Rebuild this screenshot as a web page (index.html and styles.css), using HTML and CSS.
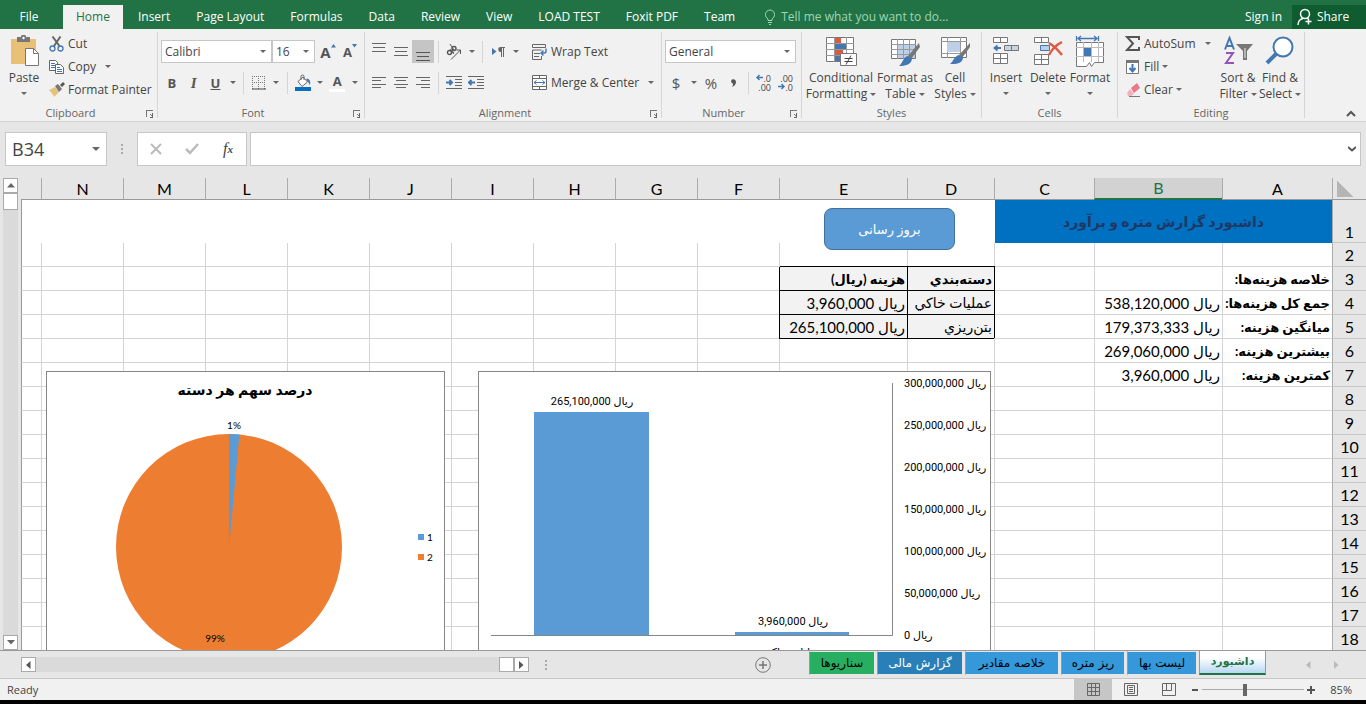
FILE: index.html
```html
<!DOCTYPE html>
<html lang="en">
<head>
  <meta charset="UTF-8" />
  <meta name="viewport" content="width=device-width, initial-scale=1.0"/>
  <title>داشبورد گزارش متره و برآورد</title>
  <link rel="stylesheet" href="styles.css">
</head>
<body>
  <!-- Tabs -->
  <header class="tabs">
    <button class="tab file">File</button>
    <button class="tab active">Home</button>
    <button class="tab">Insert</button>
    <button class="tab">Page Layout</button>
    <button class="tab">Formulas</button>
    <button class="tab">Data</button>
    <button class="tab">Review</button>
    <button class="tab">View</button>
    <button class="tab">LOAD TEST</button>
    <button class="tab">Foxit PDF</button>
    <button class="tab">Team</button>
    <button class="tell-me">
      <svg width="12" height="16" viewBox="0 0 12 16" fill="none" stroke="#9fd5b5"><path d="M4 11.500V10C2.500 9 1.500 7.500 1.500 5.500a4.500 4.500 0 0 1 9 0C10.500 7.500 9.500 9 8 10v1.500zM4 13.500h4M5 15.500h2"/></svg>
      Tell me what you want to do...
    </button>
    <a class="sign-in" href="#">Sign in</a>
    <button class="share">
      <svg width="16" height="18" viewBox="0 0 16 18" fill="none" stroke="#fff" stroke-width="1.500"><circle cx="8" cy="6" r="4.500"/><path d="M1 17c0-3 2-6 5-6.500M10 10l2 1.500M11.500 10.500v6M8.500 13.500h6"/></svg>
      Share
    </button>
  </header>

  <!-- Ribbon -->
  <div class="ribbon">
    <section class="group clipboard">
      <div class="group-body">
        <button class="big">
          <svg width="32" height="32" viewBox="0 0 32 32"><path d="M3 4h25v25H3z" fill="#e8c078"/><path d="M9 2h4a2.500 2.500 0 0 1 5 0h4v5H9z" fill="#777"/><circle cx="15.500" cy="3" r="1.200" fill="#fff"/><path d="M17.500 13.500h8l5 5v12h-13z" fill="#fff" stroke="#777"/><path d="M25.500 13.500v5h5" fill="none" stroke="#777"/></svg>
          <span>Paste</span><i class="arrow"></i>
        </button>
        <div class="stack">
          <button class="small"><svg width="16" height="16" viewBox="0 0 16 16" fill="none"><path d="M3.500 0.500l7 9.500M11.500 0.500L5 10" stroke="#666" stroke-width="2"/><circle cx="3.500" cy="12.500" r="2.500" stroke="#4377b2" stroke-width="1.300"/><circle cx="11.500" cy="12.500" r="2.500" stroke="#4377b2" stroke-width="1.300"/></svg>Cut</button>
          <button class="small"><svg width="16" height="16" viewBox="0 0 16 16" fill="#fff" stroke="#666"><path d="M0.500 1.500h6l2 2v8h-8z"/><path d="M2 4.500h4M2 6.500h4M2 8.500h4" stroke="#4377b2"/><path d="M6.500 5.500h5l3 3v6h-8z"/><path d="M8 8.500h3M8 10.500h5M8 12.500h5" stroke="#4377b2"/></svg>Copy<i class="arrow far"></i></button>
          <button class="small"><svg width="16" height="16" viewBox="0 0 16 16"><path d="M0 8l6-3 4 5-5 5c-1-3-3-5-5-7z" fill="#e8c078"/><path d="M6 4l3-2 4 5-3 3z" fill="#777"/><path d="M11 3l3-3 2 2-3 3z" fill="#555"/></svg>Format Painter</button>
        </div>
      </div>
      <h2>Clipboard</h2>
      <button class="launcher" aria-label="Clipboard options"></button>
    </section>

    <section class="group font">
      <div class="lines">
        <div class="line">
          <label class="combo name"><select aria-label="Font"><option>Calibri</option></select><i class="arrow"></i></label>
          <label class="combo size"><select aria-label="Font size"><option>16</option></select><i class="arrow"></i></label>
          <button class="tool grow"><b>A</b><svg width="5" height="4" viewBox="0 0 5 4" fill="#4377b2"><path d="M0 3.500L2.500 0 5 3.500z"/></svg></button>
          <button class="tool shrink"><b>A</b><svg width="5" height="4" viewBox="0 0 5 4" fill="#4377b2"><path d="M0 0h5L2.500 3.500z"/></svg></button>
        </div>
        <div class="line">
          <button class="tool"><b>B</b></button>
          <button class="tool italic"><b>I</b></button>
          <button class="tool underline"><b>U</b></button>
          <button class="drop" aria-label="Underline menu"><i class="arrow"></i></button>
          <span class="bar"></span>
          <button class="tool" aria-label="Borders"><svg width="14" height="14" viewBox="0 0 14 14" stroke="#777"><path d="M0.500 0v13M6.500 0v13M12.500 0v13M0 0.500h13M0 6.500h13" stroke-dasharray="1 1"/><path d="M0 13h14" stroke="#444"/></svg></button>
          <button class="drop" aria-label="Borders menu"><i class="arrow"></i></button>
          <span class="bar"></span>
          <button class="tool" aria-label="Fill color"><svg width="16" height="18" viewBox="0 0 16 18"><path d="M3 7.500L8 3l4.500 5L7 12.500z" fill="#fff" stroke="#666"/><path d="M6 6V2.500a1.500 1.500 0 0 1 3 0V6" fill="none" stroke="#666"/><path d="M11 5c3-1 5 2 4 6-1-1-1-2-2-3z" fill="#4377b2"/><path d="M0 13h16v4H0z" fill="#0070c0"/></svg></button>
          <button class="drop" aria-label="Fill color menu"><i class="arrow"></i></button>
          <button class="tool color"><b>A</b></button>
          <button class="drop" aria-label="Font color menu"><i class="arrow"></i></button>
        </div>
      </div>
      <h2>Font</h2>
      <button class="launcher" aria-label="Font options"></button>
    </section>

    <section class="group alignment">
      <div class="group-body">
        <div class="lines split">
          <div class="line">
            <button class="tool" aria-label="Top align"><svg class="up" width="14" height="13" viewBox="0 0 14 13" stroke="#666"><path d="M0 0.500h14M1 4.500h12M0 8.500h14"/></svg></button>
            <button class="tool" aria-label="Middle align"><svg width="14" height="9" viewBox="0 0 14 9" stroke="#666"><path d="M0 0.500h14M1 4.500h12M0 8.500h14"/></svg></button>
            <button class="tool pressed" aria-label="Bottom align"><svg class="down" width="14" height="13" viewBox="0 0 14 13" stroke="#555"><path d="M0 4.500h14M1 8.500h12M0 12.500h14"/></svg></button>
            <span class="bar"></span>
            <button class="tool" aria-label="Orientation"><svg width="16" height="16" viewBox="0 0 16 16" fill="none" stroke="#555"><circle cx="3.500" cy="8.500" r="2" stroke-width="1.400"/><path d="M4 5.500l4 4" stroke-width="1.400"/><circle cx="8" cy="4.500" r="2" stroke-width="1.400"/><path d="M4 0l4 6M5 15.500L14.500 6M10.500 6h4v4"/></svg></button>
            <button class="drop" aria-label="Orientation menu"><i class="arrow"></i></button>
            <span class="bar"></span>
            <button class="tool" aria-label="Text direction"><svg width="13" height="10" viewBox="0 0 13 10"><path d="M0 1l4.500 3.500L0 8z" fill="#4377b2"/><path d="M8.500 0H13v1h-1v9h-1V1h-1v9H9V5a2.500 2.500 0 0 1-.500-5z" fill="#666"/></svg></button>
            <button class="drop" aria-label="Text direction menu"><i class="arrow"></i></button>
          </div>
          <div class="line">
            <button class="tool" aria-label="Align left"><svg width="14" height="11" viewBox="0 0 14 11" stroke="#666"><path d="M0 0.500h14M0 3.500h9M0 7.500h14M0 10.500h9"/></svg></button>
            <button class="tool" aria-label="Center"><svg width="14" height="11" viewBox="0 0 14 11" stroke="#666"><path d="M0 0.500h14M2 3.500h10M0 7.500h14M2 10.500h10"/></svg></button>
            <button class="tool" aria-label="Align right"><svg width="14" height="11" viewBox="0 0 14 11" stroke="#666"><path d="M0 0.500h14M5 3.500h9M0 7.500h14M5 10.500h9"/></svg></button>
            <span class="bar"></span>
            <button class="tool" aria-label="Decrease indent"><svg width="16" height="13" viewBox="0 0 16 13" stroke="#666"><path d="M0 0.500h16M9 3.500h7M9 6.500h7M9 9.500h7M0 12.500h16"/><path d="M0 6.500h6M3.500 4l2.500 2.500L3.500 9" stroke="#4377b2" stroke-width="2" fill="none"/></svg></button>
            <button class="tool" aria-label="Increase indent"><svg width="16" height="13" viewBox="0 0 16 13" stroke="#666"><path d="M0 0.500h16M9 3.500h7M9 6.500h7M9 9.500h7M0 12.500h16"/><path d="M7 6.500H1M3.500 4L1 6.500 3.500 9" stroke="#4377b2" stroke-width="2" fill="none"/></svg></button>
          </div>
        </div>
        <div class="lines">
          <div class="line"><button class="small"><svg width="16" height="16" viewBox="0 0 16 16" fill="none" stroke="#666"><path d="M0.500 0.500h13v3H0.500zM0.500 6h9M0.500 6v9.500h9V12M2 9.500h6M2 12.500h5"/><path d="M14 4.500v3c0 1-.500 1.500-2 1.500H9M11.500 6.500L9 9l2.500 2.500" stroke="#4377b2" stroke-width="1.400"/></svg>Wrap Text</button></div>
          <div class="line"><button class="small"><svg width="16" height="16" viewBox="0 0 16 16" fill="#fff" stroke="#666"><path d="M0.500 0.500h14v14H0.500zM0.500 3.500h14M0.500 11.500h14M7.500 0.500v3M7.500 11.500v3"/><path d="M2 7.500h11M4.500 5.500l-2.500 2 2.500 2M10.500 5.500l2.500 2-2.500 2" stroke="#4377b2" fill="none"/></svg>Merge &amp; Center<i class="arrow far"></i></button></div>
        </div>
      </div>
      <h2>Alignment</h2>
      <button class="launcher" aria-label="Alignment options"></button>
    </section>

    <section class="group number">
      <div class="lines">
        <div class="line"><label class="combo format"><select aria-label="Number format"><option>General</option></select><i class="arrow"></i></label></div>
        <div class="line">
          <button class="tool symbol">$</button>
          <button class="drop" aria-label="Currency menu"><i class="arrow"></i></button>
          <button class="tool symbol">%</button>
          <button class="tool symbol comma" aria-label="Comma style"><svg width="5" height="8" viewBox="0 0 5 8" fill="#555"><path d="M1 0.500C3-.500 5 1 5 3 5 5.500 3 7.500 1 8c1-1.500 1-2.500 1-3.500C0 4.500-.500 1.500 1 .500z"/></svg></button>
          <span class="bar"></span>
          <button class="tool decimals"><span><svg width="7" height="7" viewBox="0 0 7 7" fill="none" stroke="#4377b2" stroke-width="1.500"><path d="M7 3.500H1M3.500 1L1 3.500 3.500 6"/></svg>.0</span><span>.00</span></button>
          <button class="tool decimals"><span>.00</span><span><svg width="7" height="7" viewBox="0 0 7 7" fill="none" stroke="#4377b2" stroke-width="1.500"><path d="M0 3.500h6M3.500 1L6 3.500 3.500 6"/></svg>.0</span></button>
        </div>
      </div>
      <h2>Number</h2>
      <button class="launcher" aria-label="Number options"></button>
    </section>

    <section class="group styles">
      <div class="group-body">
        <button class="big wide">
          <svg width="32" height="32" viewBox="0 0 32 32"><path d="M1.500 2.500h27v24h-27z" fill="#fff" stroke="#777"/><path d="M1 8.500h28M1 14.500h28M1 20.500h28M9.500 2v25M21.500 2v25" stroke="#999"/><path d="M10 3h6v5h-6zM10 15h8v5h-8z" fill="#e0593e"/><path d="M10 9h11v5H10zM10 21h5v5h-5z" fill="#4377b2"/><path d="M15.500 18.500h16v12h-16z" fill="#fff" stroke="#777"/><path d="M19.500 23.500h8M19.500 26.500h8M26 20.500l-5 9" stroke="#444"/></svg>
          <span>Conditional</span><span>Formatting<i class="arrow"></i></span>
        </button>
        <button class="big mid">
          <svg width="32" height="32" viewBox="0 0 32 32"><path d="M2.500 4.500h24v19h-24z" fill="#fff" stroke="#777"/><path d="M9 9h17v14H9z" fill="#bdd0e8"/><path d="M2 9.500h25M2 14.500h25M2 19.500h25M8.500 4v20M14.500 4v20M20.500 4v20" stroke="#999"/><path d="M30 8L19 21l3 3 9-12z" fill="#777"/><path d="M19 21l4 3c-1 6-7 7-13 7 4-3 4-9 9-10z" fill="#4377b2"/></svg>
          <span>Format as</span><span>Table<i class="arrow"></i></span>
        </button>
        <button class="big narrow">
          <svg width="32" height="32" viewBox="0 0 32 32"><path d="M2.500 2.500h25v20h-25z" fill="#fff" stroke="#777"/><path d="M2 6.500h26M2 18.500h26M8.500 2v21M21.500 2v21" stroke="#999"/><path d="M8 7h13v10H8z" fill="#bdd0e8"/><path d="M31 8L20 20l3 3 8-11z" fill="#777"/><path d="M20 20l4 3c-1 6-7 6-13 6 4-3 4-8 9-9z" fill="#4377b2"/></svg>
          <span>Cell</span><span>Styles<i class="arrow"></i></span>
        </button>
      </div>
      <h2>Styles</h2>
    </section>

    <section class="group cells">
      <div class="group-body">
        <button class="big">
          <svg width="32" height="32" viewBox="0 0 32 32" fill="#fff" stroke="#777"><path d="M3.500 2.500h14v5h-14zM10.500 2.500v5M3.500 18.500h14v10h-14zM3.500 23.500h14M10.500 18.500v10"/><path d="M14.500 10.500h14v5h-14zM21.500 10.500v5" fill="#c9d3e2"/><path d="M11 13H5M7.500 10.500L4.500 13l3 2.500" fill="none" stroke="#4377b2" stroke-width="1.800"/></svg>
          <span>Insert</span><i class="arrow"></i>
        </button>
        <button class="big">
          <svg width="32" height="32" viewBox="0 0 32 32" fill="#fff" stroke="#777"><path d="M2.500 2.500h14v5h-14zM9.500 2.500v5M2.500 19.500h14v10h-14zM2.500 24.500h14M9.500 19.500v10"/><path d="M8.500 10.500h9v5h-9z" fill="#bdd0e8" stroke="#4377b2"/><path d="M17 8c5 3 9 7 13 12M30 7c-6 3-10 7-13 13" fill="none" stroke="#e0593e" stroke-width="2.500"/></svg>
          <span>Delete</span><i class="arrow"></i>
        </button>
        <button class="big">
          <svg width="32" height="32" viewBox="0 0 32 32" fill="#fff" stroke="#777"><path d="M2.500 7.500h27v20h-9l-3 4-2-4-3 4H2.500z"/><path d="M2 12.500h28M2 21.500h28M9.500 7v20M17.500 7v20M24.500 7v20" stroke="#bbb"/><path d="M10 13h7v8h-7z" fill="#4377b2" stroke="none"/><path d="M2.500 1v5M24.500 1v5M4 3.500h19M7 1L4 3.500 7 6M20 1l3 2.500L20 6" fill="none" stroke="#4377b2" stroke-width="1.300"/></svg>
          <span>Format</span><i class="arrow"></i>
        </button>
      </div>
      <h2>Cells</h2>
    </section>

    <section class="group editing">
      <div class="group-body">
        <div class="stack">
          <button class="small"><svg width="16" height="16" viewBox="0 0 16 16" fill="none" stroke="#555" stroke-width="2"><path d="M14 4V1H2l6 6.500L2 14h12v-3"/></svg>AutoSum<i class="arrow far"></i></button>
          <button class="small"><svg width="16" height="16" viewBox="0 0 16 16"><path d="M1.500 1.500h12v13h-12z" fill="#fff" stroke="#777"/><path d="M1 1h13v3H1z" fill="#777"/><path d="M7.500 5v7M4.500 9l3 3.500 3-3.500" fill="none" stroke="#4377b2" stroke-width="2"/></svg>Fill<i class="arrow"></i></button>
          <button class="small"><svg width="16" height="16" viewBox="0 0 16 16"><path d="M6 6l6-5 3 5-6 5z" fill="#e8788a"/><path d="M5 7l4 5-3 2H3l-1-3z" fill="#f3b0ba"/><path d="M4 14.500h11" stroke="#777"/></svg>Clear<i class="arrow"></i></button>
        </div>
        <button class="big">
          <svg width="32" height="32" viewBox="0 0 32 32"><path d="M3 14.500L7.500 3 12 14.500M4.500 11h6" fill="none" stroke="#4377b2" stroke-width="2"/><path d="M4 18h7L4 28h8" fill="none" stroke="#9355b8" stroke-width="2"/><path d="M14 9h17l-6 7v9h-4v-9z" fill="#777"/><path d="M23 13v10" stroke="#f0f0f0"/></svg>
          <span>Sort &amp;</span><span>Filter<i class="arrow"></i></span>
        </button>
        <button class="big">
          <svg width="32" height="32" viewBox="0 0 32 32"><circle cx="19" cy="12" r="9.500" fill="#fff" stroke="#4377b2" stroke-width="2"/><path d="M12 19l-9 9" stroke="#4377b2" stroke-width="4"/></svg>
          <span>Find &amp;</span><span>Select<i class="arrow"></i></span>
        </button>
      </div>
      <h2>Editing</h2>
    </section>
    <button class="collapse" aria-label="Collapse ribbon"><svg width="10" height="7" viewBox="0 0 10 7" fill="none" stroke="#555" stroke-width="2"><path d="M1 6l4-4 4 4"/></svg></button>
  </div>

  <!-- Formula bar -->
  <div class="formula-bar">
    <label class="name-box"><input type="text" value="B34" aria-label="Name box"><i class="arrow"></i></label>
    <span class="dots"></span>
    <div class="fx-box">
      <button aria-label="Cancel"><svg width="12" height="12" viewBox="0 0 12 12" stroke="#bbb" stroke-width="2"><path d="M1 1l10 10M11 1L1 11"/></svg></button>
      <button aria-label="Enter"><svg width="14" height="12" viewBox="0 0 14 12" fill="none" stroke="#bbb" stroke-width="2.500"><path d="M1 6l4 4 8-9"/></svg></button>
      <button class="fx"><i>f</i><sub>x</sub></button>
    </div>
    <label class="formula"><input type="text" aria-label="Formula"><svg width="8" height="6" viewBox="0 0 8 6" fill="none" stroke="#555" stroke-width="2"><path d="M0 1l4 3.500L8 1"/></svg></label>
  </div>

  <!-- Sheet -->
  <main class="workspace">
    <div class="v-scroll">
      <button aria-label="Scroll up"><svg width="8" height="5" viewBox="0 0 8 5" fill="#666"><path d="M0 4.500L4 0l4 4.500z"/></svg></button>
      <div class="thumb"></div>
      <button class="end" aria-label="Scroll down"><svg width="8" height="5" viewBox="0 0 8 5" fill="#666"><path d="M0 0h8L4 4.500z"/></svg></button>
    </div>
    <div class="sheet">
      <table class="grid" dir="rtl">
        <colgroup>
          <col class="c-head"><col class="c-a"><col class="c-b"><col class="c-c"><col class="c-d"><col class="c-b">
          <col class="c-std"><col class="c-std"><col class="c-std"><col class="c-std"><col class="c-std"><col class="c-std"><col class="c-std"><col class="c-std"><col class="c-std">
          <col>
        </colgroup>
        <thead><tr id="grid-head"></tr></thead>
        <tbody id="grid-body"></tbody>
      </table>

      <button class="update" dir="rtl">بروز رسانی</button>

      <figure class="chart bar-chart">
        <svg width="511" height="300" viewBox="0 0 511 300">
          <path d="M55 40h115v224H55zM256 260h114v4H256z" fill="#5b9bd5"/>
          <path d="M12 263.500h401.500V11" fill="none" stroke="#868686"/>
          <g class="labels" id="bar-labels"></g>
        </svg>
      </figure>

      <figure class="chart pie-chart">
        <svg width="397" height="300" viewBox="0 0 397 300">
          <text class="title" x="198" y="23">درصد سهم هر دسته</text>
          <circle cx="182" cy="175" r="113" fill="#ed7d31"/>
          <path d="M182 175V62a113 113 0 0 1 10.400 0.500z" fill="#5b9bd5"/>
          <path d="M371 162h6v6h-6z" fill="#5b9bd5"/>
          <path d="M371 182h6v6h-6z" fill="#ed7d31"/>
          <g class="pie-labels">
            <text x="187" y="57">1%</text>
            <text x="168" y="270">99%</text>
            <text x="383" y="169">1</text>
            <text x="383" y="189">2</text>
          </g>
        </svg>
      </figure>
    </div>
  </main>

  <footer>
    <div class="sheet-bar">
      <div class="h-scroll">
        <button aria-label="Scroll left"><svg width="5" height="8" viewBox="0 0 5 8" fill="#555"><path d="M4.500 0v8L0 4z"/></svg></button>
        <div class="thumb"></div>
        <button aria-label="Scroll right"><svg width="5" height="8" viewBox="0 0 5 8" fill="#555"><path d="M0 0v8l4.500-4z"/></svg></button>
      </div>
      <span class="dots"></span>
      <button class="add" aria-label="New sheet"><svg width="16" height="16" viewBox="0 0 16 16" fill="none" stroke="#777"><circle cx="8" cy="8" r="7.300"/><path d="M8 4v8M4 8h8" stroke-width="1.500"/></svg></button>
      <nav class="sheets">
        <button class="sheet-tab green">سناریوها</button>
        <button class="sheet-tab dark">گزارش مالی</button>
        <button class="sheet-tab values">خلاصه مقادیر</button>
        <button class="sheet-tab detail">ریز متره</button>
        <button class="sheet-tab prices">لیست بها</button>
        <button class="sheet-tab current">داشبورد</button>
      </nav>
      <button class="nav" aria-label="Previous sheet"><svg width="5" height="8" viewBox="0 0 5 8" fill="#bbb"><path d="M4.500 0v8L0 4z"/></svg></button>
      <button class="nav" aria-label="Next sheet"><svg width="5" height="8" viewBox="0 0 5 8" fill="#bbb"><path d="M0 0v8l4.500-4z"/></svg></button>
    </div>
    <div class="status">
      <span class="ready">Ready</span>
      <button class="view selected" aria-label="Normal"><svg width="13" height="13" viewBox="0 0 13 13" fill="none" stroke="#666"><path d="M0.500 0.500h12v12H0.500zM0.500 4.500h12M0.500 8.500h12M4.500 0.500v12M8.500 0.500v12"/></svg></button>
      <button class="view" aria-label="Page layout"><svg width="14" height="13" viewBox="0 0 14 13" fill="none" stroke="#666"><path d="M0.500 0.500h13v12H0.500zM3.500 2.500h7v8h-7zM5 4.500h4M5 6.500h4M5 8.500h4"/></svg></button>
      <button class="view" aria-label="Page break preview"><svg width="14" height="13" viewBox="0 0 14 13" fill="none" stroke="#666"><path d="M0.500 0.500h13v12H0.500zM4.500 0.500v7M9.500 0.500v7M0.500 7.500h9"/></svg></button>
      <button class="zoom-btn" aria-label="Zoom out"><svg width="8" height="8" viewBox="0 0 8 8" stroke="#555" stroke-width="2"><path d="M1 4h6"/></svg></button>
      <input type="range" min="0" max="100" value="42" aria-label="Zoom">
      <button class="zoom-btn" aria-label="Zoom in"><svg width="8" height="8" viewBox="0 0 8 8" stroke="#555" stroke-width="2"><path d="M0 4h8M4 0v8"/></svg></button>
      <span class="percent">85%</span>
    </div>
  </footer>

  <script>
    const columns = 'ABCDEFGHIJKLMN'.split('');
    const cells = {
      A3: 'خلاصه هزینه‌ها:',
      A4: 'جمع کل هزینه‌ها:', B4: 'ریال 538,120,000',
      A5: 'میانگین هزینه:', B5: 'ریال 179,373,333',
      A6: 'بیشترین هزینه:', B6: 'ریال 269,060,000',
      A7: 'کمترین هزینه:', B7: 'ریال 3,960,000',
      D3: 'دسته‌بندي', E3: 'هزینه (ریال)',
      D4: 'عملیات خاكي', E4: 'ریال 3,960,000',
      D5: 'بتن‌ریزي', E5: 'ریال 265,100,000'
    };

    function cellClass(col, row) {
      if ((col === 'D' || col === 'E') && row >= 3 && row <= 5) {
        if (row === 3) return 'boxed bold';
        return col === 'D' ? 'boxed category' : 'boxed';
      }
      return col === 'A' ? 'bold' : '';
    }

    function renderGrid() {
      document.getElementById('grid-head').innerHTML =
        '<th class="corner"></th>' +
        columns.map(c => `<th class="${c === 'B' ? 'picked' : ''}">${c}</th>`).join('') +
        '<th></th>';

      let html = '<tr class="first"><th>1</th><td class="banner" colspan="3">داشبورد گزارش متره و برآورد</td><td colspan="12"></td></tr>';
      for (let row = 2; row <= 18; row++) {
        html += `<tr><th>${row}</th>`;
        columns.forEach(c => {
          html += `<td class="${cellClass(c, row)}">${cells[c + row] || ''}</td>`;
        });
        html += '<td></td></tr>';
      }
      document.getElementById('grid-body').innerHTML = html;
    }

    function renderBarLabels() {
      let html = '';
      for (let i = 0; i <= 6; i++) {
        const value = (300000000 - i * 50000000).toLocaleString('en-US');
        html += `<text class="axis" x="425" y="${15 + i * 42}">ریال ${value}</text>`;
      }
      html += '<text x="113" y="33">ریال 265,100,000</text>';
      html += '<text x="314" y="253">ریال 3,960,000</text>';
      html += '<text x="113" y="284">بتن‌ریزي</text>';
      html += '<text x="314" y="284">عملیات خاكي</text>';
      document.getElementById('bar-labels').innerHTML = html;
    }

    renderGrid();
    renderBarLabels();
  </script>
</body>
</html>
```

FILE: styles.css
```css
* {
  box-sizing: border-box;
}

body {
  margin: 0;
  height: 100vh;
  display: flex;
  flex-direction: column;
  overflow: hidden;
  background-color: #e6e6e6;
  font-family: "Open Sans", "DejaVu Sans", sans-serif;
  font-size: 12px;
  line-height: 16px;
  color: #444;
}

button, input, select {
  font: inherit;
  color: inherit;
  border: none;
  background: none;
  padding: 0;
  margin: 0;
  border-radius: 0;
}

button {
  display: flex;
  align-items: center;
  justify-content: center;
  white-space: nowrap;
}

svg {
  flex: none;
  display: block;
}

.arrow {
  flex: none;
  display: inline-block;
  border: 3px solid transparent;
  border-top-color: #666;
  border-bottom: none;
}

/* Tabs */
.tabs {
  flex: none;
  display: flex;
  height: 29px;
  padding-top: 5px;
  background-color: #217346;
  color: white;
}

.tab {
  padding: 0 13px;
}

.tab.file {
  width: 63px;
  padding-right: 18px;
}

.tab.active {
  margin-right: 2px;
  background-color: #f1f1f1;
  color: #217346;
}

.tell-me {
  gap: 5px;
  margin-left: 16px;
  color: #9fd5b5;
}

.sign-in {
  margin-left: auto;
  padding: 4px 10px;
  color: white;
  text-decoration: none;
}

.share {
  width: 74px;
  gap: 4px;
  padding-right: 12px;
  background-color: #0e5c2f;
}

/* Ribbon */
.ribbon {
  flex: none;
  display: flex;
  position: relative;
  height: 93px;
  padding-top: 3px;
  background-color: #f1f1f1;
  border-bottom: 1px solid #d2d2d2;
}

.group {
  flex: none;
  position: relative;
  display: flex;
  flex-direction: column;
  justify-content: space-between;
  margin-bottom: 3px;
  padding: 0 3px;
  border-right: 1px solid #d5d5d5;
}

.group h2 {
  margin: 0 0 -3px;
  font-size: 11px;
  font-weight: normal;
  text-align: center;
  color: #666;
}

.clipboard { width: 158px; }
.font { width: 207px; }
.alignment { width: 297px; }
.number { width: 140px; }
.styles { width: 180px; }
.cells { width: 136px; }
.editing { width: 187px; }

/* Leaves room for the dialog launcher */
.clipboard h2, .font h2, .alignment h2, .number h2 {
  padding-right: 16px;
}

.group-body {
  display: flex;
}

.stack {
  flex: 1;
  min-width: 0;
}

.small {
  height: 23px;
  gap: 3px;
  padding-left: 4px;
}

.small .arrow.far {
  margin-left: 6px;
}

.big {
  flex: none;
  width: 42px;
  flex-direction: column;
  justify-content: flex-start;
  padding-top: 3px;
}

.big svg {
  margin-bottom: 3px;
}

.big > .arrow {
  margin-top: 6px;
}

.big span .arrow {
  margin: 0 0 2px 3px;
}

.big.wide { width: 72px; }
.big.mid { width: 56px; }
.big.narrow { width: 44px; }

.lines {
  padding-top: 4px;
}

.lines.split {
  width: 160px;
}

.line {
  display: flex;
  align-items: center;
  height: 31px;
}

.tool {
  width: 22px;
  height: 23px;
}

.tool b {
  font-size: 13px;
  color: #555;
}

.tool.grow b {
  font-size: 15px;
}

.tool.grow svg, .tool.shrink svg {
  margin-bottom: 12px;
}

.tool.grow {
  margin-left: 2px;
}

.tool.italic b {
  font-family: "Liberation Serif", serif;
  font-style: italic;
  font-size: 15px;
}

.tool.underline b {
  text-decoration: underline;
}

.tool.color b {
  width: 16px;
  border-bottom: 3px solid white;
}

.tool.pressed {
  background-color: #c5c5c5;
}

.tool .up {
  margin-bottom: 4px;
}

.tool .down {
  margin-top: 5px;
}

.tool.symbol {
  font-size: 15px;
  color: #555;
}

.tool.decimals {
  flex-direction: column;
  align-items: flex-end;
  padding-right: 4px;
  font-size: 9px;
  line-height: 9px;
}

.tool.decimals span {
  display: flex;
}

.drop {
  width: 13px;
  height: 23px;
}

.bar {
  width: 1px;
  height: 22px;
  margin: 0 4px;
  background-color: #d5d5d5;
}

.combo {
  display: flex;
  align-items: center;
  height: 23px;
  padding: 0 5px 0 3px;
  border: 1px solid #c6c6c6;
  background-color: white;
}

.combo select {
  flex: 1;
  min-width: 0;
  appearance: none;
}

.combo.name { width: 111px; }
.combo.size { width: 43px; }
.combo.format { width: 131px; }

.launcher {
  position: absolute;
  right: 4px;
  bottom: 1px;
  width: 7px;
  height: 7px;
  border-left: 1px solid #777;
  border-top: 1px solid #777;
}

.launcher::after {
  content: "";
  width: 4px;
  height: 4px;
  margin: 3px 0 0 3px;
  border-right: 1px solid #666;
  border-bottom: 1px solid #666;
  background: linear-gradient(45deg, transparent 40%, #777 40%, #777 60%, transparent 60%);
}

.collapse {
  align-self: flex-end;
  margin: 0 10px 4px auto;
}

/* Formula bar */
.formula-bar {
  flex: none;
  display: flex;
  padding: 10px 5px 12px;
}

.name-box, .fx-box, .formula {
  display: flex;
  align-items: center;
  height: 34px;
  background-color: white;
  border: 1px solid #c6c6c6;
}

.name-box {
  width: 102px;
  padding: 0 6px;
  font-size: 18px;
}

.name-box input {
  flex: 1;
  min-width: 0;
}

.name-box .arrow {
  border-width: 4px 4px 0;
}

.dots {
  align-self: center;
  width: 2px;
  height: 10px;
  margin: 0 14px;
  background: repeating-linear-gradient(#aaa 0 2px, transparent 2px 4px);
}

.fx-box {
  width: 110px;
  margin-right: 3px;
}

.fx-box button {
  flex: 1;
  height: 100%;
}

.fx {
  font-family: "Liberation Serif", serif;
  font-size: 16px;
}

.fx sub {
  font-size: 11px;
  font-style: italic;
  font-weight: bold;
}

.formula {
  flex: 1;
  padding: 0 4px 0 8px;
}

.formula input {
  flex: 1;
}

/* Sheet */
.workspace {
  flex: 1;
  min-height: 0;
  display: flex;
}

.v-scroll {
  flex: none;
  display: flex;
  flex-direction: column;
  width: 15px;
  margin: 0 3px;
  background-color: #dadada;
}

.v-scroll button, .h-scroll button, .thumb {
  flex: none;
  width: 15px;
  height: 15px;
  background-color: white;
  border: 1px solid #aaa;
}

.v-scroll .thumb {
  height: 17px;
}

.v-scroll .end {
  margin-top: auto;
}

.sheet {
  flex: 1;
  position: relative;
  overflow: hidden;
}

.grid {
  width: 100%;
  table-layout: fixed;
  border-collapse: separate;
  border-spacing: 0;
  background-color: white;
  font-family: Lato, "DejaVu Sans", sans-serif;
  font-size: 15px;
  line-height: 20px;
  color: black;
}

.c-head { width: 34px; }
.c-a { width: 110px; }
.c-b { width: 128px; }
.c-c { width: 100px; }
.c-d { width: 87px; }
.c-std { width: 82px; }

.grid th {
  padding: 0;
  height: 24px;
  font-size: 16px;
  font-weight: normal;
  background-color: #e6e6e6;
  border-left: 1px solid #ababab;
  border-bottom: 1px solid #c6c6c6;
}

.grid thead th {
  height: 22px;
  border-bottom-color: #999;
}

.grid thead th:last-child {
  border-left: none;
}

.grid thead .picked {
  background-color: #d2d2d2;
  color: #217346;
  border-bottom: 2px solid #217346;
}

.grid .corner {
  background: linear-gradient(to top right, #b5b5b5 50%, transparent 50%) no-repeat 4px 3px / 16px 16px #e6e6e6;
}

.grid td {
  padding: 0 2px;
  overflow: hidden;
  white-space: nowrap;
  text-align: right;
  border-left: 1px solid #d4d4d4;
  border-bottom: 1px solid #d4d4d4;
}

.grid td.bold {
  font-size: 13px;
  font-weight: bold;
}

.grid td.category {
  font-size: 14px;
}

.grid .first th {
  height: 43px;
  vertical-align: bottom;
}

.grid .first td {
  border-bottom: none;
}

.grid .first .banner {
  background-color: #0070c0;
  color: #1f3864;
  font-size: 14px;
  font-weight: bold;
  text-align: center;
  border-left-color: white;
}

.grid tbody td:last-child {
  border-left-color: #999;
}

.grid td.boxed {
  background-color: #f2f2f2;
  border-color: black;
  box-shadow: 1px -1px black;
}

.update {
  position: absolute;
  top: 30px;
  right: 411px;
  width: 131px;
  height: 42px;
  border: 1px solid #41719c;
  border-radius: 8px;
  background-color: #5b9bd5;
  color: white;
  font-size: 13px;
}

/* Charts */
.chart {
  position: absolute;
  top: 193px;
  margin: 0;
  background-color: white;
  border: 1px solid #868686;
}

.bar-chart {
  right: 375px;
}

.pie-chart {
  right: 921px;
}

.chart text {
  direction: rtl;
  text-anchor: middle;
  font-family: Roboto, "DejaVu Sans", sans-serif;
  font-size: 11px;
  fill: black;
}

.chart .axis {
  text-anchor: end;
}

.chart .title {
  font-size: 14px;
  font-weight: bold;
}

.chart .pie-labels text {
  direction: ltr;
  font-family: Lato, sans-serif;
  font-size: 10px;
}

/* Sheet tabs */
.sheet-bar {
  display: flex;
  align-items: center;
  height: 28px;
  padding-left: 21px;
  border-top: 1px solid #999;
}

.h-scroll {
  display: flex;
  justify-content: flex-end;
  width: 508px;
  background-color: #dadada;
}

.h-scroll button:first-child {
  margin-right: auto;
}

.sheet-bar .dots {
  margin: 0 16px;
}

.add {
  margin: 0 38px 0 auto;
}

.sheets {
  display: flex;
  align-self: flex-start;
  gap: 2px;
}

.sheet-tab {
  width: 66px;
  height: 24px;
  border: 1px solid #e6e6e6;
  border-left-color: #999;
  background-color: #3498db;
  color: black;
  font-family: "DejaVu Sans", sans-serif;
}

.sheet-tab.green {
  background-color: #27ae60;
}

.sheet-tab.dark {
  width: 86px;
  background-color: #2980b9;
  color: white;
}

.sheet-tab.values { width: 94px; }
.sheet-tab.detail { width: 64px; }
.sheet-tab.prices { width: 70px; }

.sheet-tab.current {
  width: 67px;
  background: linear-gradient(white 30%, #b5d8f2);
  border: 1px solid #999;
  border-top: none;
  border-bottom: 2px solid #217346;
  color: #217346;
  font-weight: bold;
  font-size: 11px;
}

.nav {
  width: 28px;
}

.sheets + .nav {
  margin-left: 28px;
}

.nav:last-child {
  margin-right: 16px;
}

/* Status bar */
.status {
  display: flex;
  align-items: center;
  height: 26px;
  padding: 0 14px 0 7px;
  background-color: #f1f1f1;
  border-top: 1px solid #c6c6c6;
  border-bottom: 4px solid black;
  font-size: 11px;
}

.ready {
  margin-right: auto;
}

.view {
  width: 38px;
  height: 21px;
}

.view.selected {
  background-color: #c6c6c6;
}

.zoom-btn {
  width: 14px;
}

.status input {
  width: 102px;
  height: 20px;
  appearance: none;
  background: linear-gradient(#aaa, #aaa) no-repeat center / 100% 1px;
}

.status input::-webkit-slider-thumb {
  appearance: none;
  width: 4px;
  height: 12px;
  background-color: #666;
}

.percent {
  width: 34px;
  text-align: right;
}
```
